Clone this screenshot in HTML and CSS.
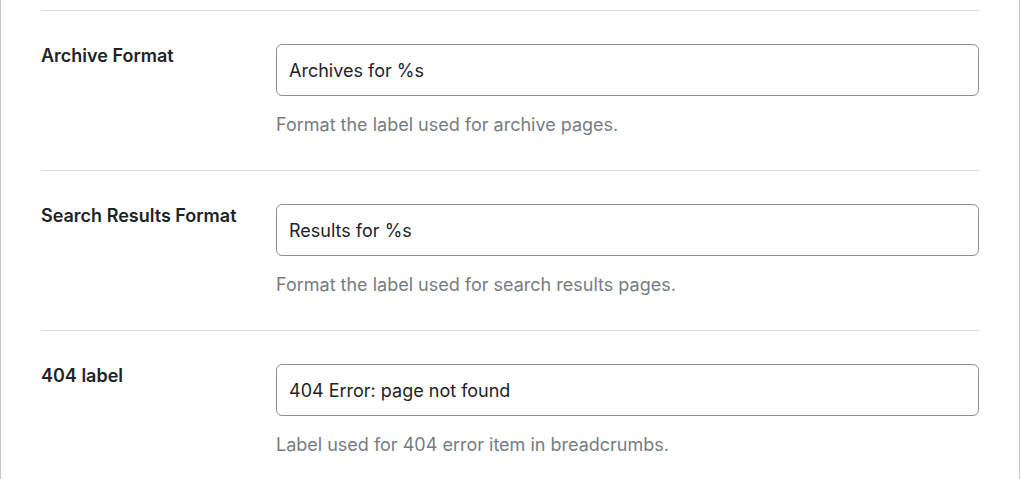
FILE: index.html
```html
<!DOCTYPE html>
<html lang="en">
<head>
  <meta charset="UTF-8">
  <title>Breadcrumb Settings</title>
  <link rel="stylesheet" href="styles.css">
</head>
<body>

  <!-- Settings panel -->
  <div class="panel">

    <div class="field-row">
      <label class="field-label" for="archive-format">Archive Format</label>
      <div class="field-control">
        <input type="text" id="archive-format" class="text-input" value="Archives for %s">
        <p class="field-help">Format the label used for archive pages.</p>
      </div>
    </div>

    <div class="field-row">
      <label class="field-label" for="search-format">Search Results Format</label>
      <div class="field-control">
        <input type="text" id="search-format" class="text-input" value="Results for %s">
        <p class="field-help">Format the label used for search results pages.</p>
      </div>
    </div>

    <div class="field-row">
      <label class="field-label" for="label-404">404 label</label>
      <div class="field-control">
        <input type="text" id="label-404" class="text-input" value="404 Error: page not found">
        <p class="field-help">Label used for 404 error item in breadcrumbs.</p>
      </div>
    </div>

  </div>

</body>
</html>
```

FILE: styles.css
```css
body {
  margin: 0;
  background: #fff;
  font-family: Inter, "Noto Sans", sans-serif;
  color: #1d2327;
}
.panel {
  width: 938px;
  padding: 10px 40px 0 40px;
  border-left: 1px solid #c3c4c7;
  border-right: 1px solid #c3c4c7;
  min-height: 469px;
}
.field-row {
  display: grid;
  grid-template-columns: 235px 1fr;
  border-top: 1px solid #dcdcde;
  padding: 33px 0 32px 0;
}
.field-label {
  font-size: 18px;
  font-weight: 600;
  line-height: 24px;
}
.text-input {
  display: block;
  box-sizing: border-box;
  width: 100%;
  height: 52px;
  padding: 0 12px;
  border: 1px solid #8c8f94;
  border-radius: 6px;
  font-family: inherit;
  font-size: 18px;
  color: #1d2327;
  background: #fff;
}
.field-help {
  margin: 16px 0 0 0;
  font-size: 18px;
  line-height: 26px;
  color: #787c82;
}
```
